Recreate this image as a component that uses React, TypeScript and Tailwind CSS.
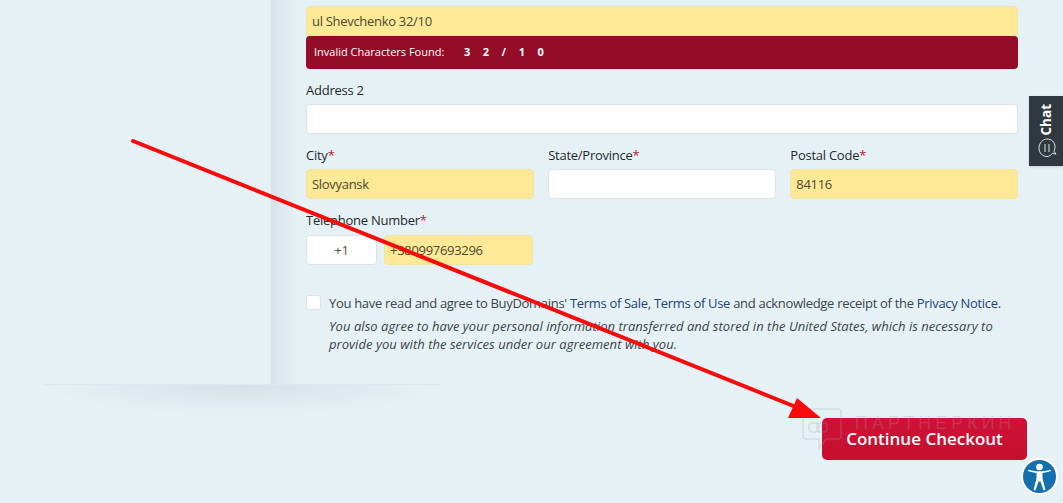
const fontStack = "font-['Open_Sans','Noto_Sans',sans-serif]";

function Label({ text, required }: { text: string; required?: boolean }) {
  return (
    <div className="h-[20px] text-[13px] leading-[20px] font-medium tracking-[-0.25px] text-[#1f2a30]">
      {text}
      {required && <span className="text-[#c8102e]">*</span>}
    </div>
  );
}

function Input({ value, filled, className }: { value?: string; filled?: boolean; className?: string }) {
  return (
    <div
      className={`flex h-[30px] items-center rounded-[4px] border px-[5px] pt-[1px] text-[13px] tracking-[-0.3px] ${
        filled ? 'border-[#f0e3a6] bg-[#ffe896] text-[#4a4a32]' : 'border-[#dbe3e8] bg-white text-[#4a5358]'
      } ${className ?? ''}`}
    >
      {value}
    </div>
  );
}

function Annotation() {
  return (
    <svg className="pointer-events-none absolute inset-0" width="1063" height="503" viewBox="0 0 1063 503">
      <line x1="133" y1="141" x2="806" y2="411" stroke="#fa0a0a" strokeWidth="4" strokeLinecap="round" />
      <polygon points="821,418 797,398 788,418" fill="#fa0a0a" />
    </svg>
  );
}

function Watermark() {
  return (
    <div className="pointer-events-none absolute left-[802px] top-[408px] flex items-start gap-[13px] text-[#9aa6ad]/25">
      <svg width="40" height="42" viewBox="0 0 40 42" fill="none" stroke="currentColor" strokeWidth="1.5">
        <path d="M4 1h32a3 3 0 0 1 3 3v24a3 3 0 0 1-3 3H24l-7 9v-9H4a3 3 0 0 1-3-3V4a3 3 0 0 1 3-3z" />
        <rect x="7" y="15" width="10" height="9" rx="3" />
        <rect x="15" y="15" width="10" height="9" rx="3" />
      </svg>
      <span className="mt-[5px] text-[18px] leading-[20px] tracking-[4px] font-['Liberation_Sans',sans-serif]">ПАРТНЕРКИН</span>
    </div>
  );
}

function ChatTab() {
  return (
    <div className="absolute right-0 top-[96px] flex h-[70px] w-[34px] flex-col items-center justify-between bg-[#30393f] pb-[7px] pt-[8px] pl-[2px] text-white shadow-sm">
      <span className="rotate-180 text-[13.500px] leading-none font-bold [writing-mode:vertical-rl]">Chat</span>
      <svg width="20" height="22" viewBox="0 0 20 22" fill="none" stroke="currentColor" strokeWidth="1" className="text-[#dfe4e6]">
        <path d="M10 2c4.4 0 8 2.9 8 8.2 0 1.7-.4 3-1 4l2 3-3.4-1c-1.400 2-3.300 3.300-5.600 3.300-4.400 0-8-3.500-8-8.300S5.600 2 10 2z" />
        <path d="M8 7v8M12 7v8" />
      </svg>
    </div>
  );
}

function AccessibilityBadge() {
  return (
    <div className="absolute left-[1021px] top-[458px] flex h-[37px] w-[37px] items-center justify-center rounded-full border-2 border-white bg-[#146fae]">
      <svg width="29" height="30" viewBox="0 0 29 30" fill="white">
        <circle cx="14.500" cy="5" r="3.300" />
        <path d="M3.500 9.300c-.9-.3-.4-1.800.5-1.500 3.400 1 7 1.500 10.500 1.500s7.100-.5 10.500-1.500c.9-.3 1.400 1.200.5 1.500-2.600.9-5.300 1.400-8 1.700-.1 3 0 5.500.5 7.500l2.300 8.700c.3 1.200-1.500 1.700-1.900.5l-3-8.300h-1.800l-3 8.300c-.4 1.200-2.200.7-1.900-.5l2.300-8.700c.5-2 .6-4.500.5-7.500-2.700-.3-5.400-.8-8-1.700z" />
      </svg>
    </div>
  );
}

export default function App() {
  return (
    <div className={`relative h-[503px] w-[1063px] overflow-hidden bg-[#e6f1f5] ${fontStack}`}>
      <div className="flex h-[384px]">
        <div className="w-[271px]" />
        <main className="w-[747px] bg-[linear-gradient(to_right,#d7e3eb,#e6f1f5_26px)] pl-[35px] pt-[6px]">
          <Input value="ul Shevchenko 32/10" filled className="rounded-b-none" />
          <div className="flex h-[33px] items-center rounded-[4px] bg-[#930c28] pl-[8px] text-[11px] text-white">
            <span className="w-[150px]">Invalid Characters Found:</span>
            <span className="flex gap-[12.500px] font-bold">
              <span>3</span>
              <span>2</span>
              <span>/</span>
              <span>1</span>
              <span>0</span>
            </span>
          </div>

          <div className="mt-[11px]">
            <Label text="Address 2" />
            <Input className="mt-[4px]" />
          </div>

          <div className="mt-[11px] grid grid-cols-3 gap-x-[14.500px]">
            <div>
              <Label text="City" required />
              <Input value="Slovyansk" filled className="mt-[4px]" />
            </div>
            <div>
              <Label text="State/Province" required />
              <Input className="mt-[4px]" />
            </div>
            <div>
              <Label text="Postal Code" required />
              <Input value="84116" filled className="mt-[4px]" />
            </div>
          </div>

          <div className="mt-[11px]">
            <Label text="Telephone Number" required />
            <div className="mt-[5px] flex w-[227px] gap-[7px]">
              <Input value="+1" className="w-[71px] justify-center" />
              <Input value="+380997693296" filled className="flex-1" />
            </div>
          </div>

          <div className="mt-[29px] flex gap-[8px]">
            <div className="mt-[1px] h-[15px] w-[15px] shrink-0 rounded-[3px] border border-[#dbe3e8] bg-white" />
            <div className="text-[13px] text-[#3a444a]">
              <p className="leading-[18px] tracking-[-0.31px] whitespace-nowrap">
                You have read and agree to BuyDomains' <a className="text-[#23417a]">Terms of Sale</a>,{' '}
                <a className="text-[#23417a]">Terms of Use</a> and acknowledge receipt of the{' '}
                <a className="text-[#23417a]">Privacy Notice</a>.
              </p>
              <p className="mt-[5px] leading-[18px] tracking-[0.04px] italic">
                You also agree to have your personal information transferred and stored in the United States, which is necessary to provide you with the services under our agreement with you.
              </p>
            </div>
          </div>
        </main>
      </div>

      <div className="ml-[44px] h-[30px] w-[395px] border-t border-[#dde7ec] bg-[radial-gradient(ellipse_50%_100%_at_50%_0%,#d5e1e9,#e6f1f5)]" />

      <div className="mr-[36px] mt-[4px] flex justify-end">
        <button className="h-[42px] w-[205px] rounded-[5px] bg-[linear-gradient(to_bottom,#cf1238,#c40f2d)] text-[17px] font-semibold text-white">
          Continue Checkout
        </button>
      </div>

      <Watermark />
      <Annotation />
      <ChatTab />
      <AccessibilityBadge />
    </div>
  );
}
